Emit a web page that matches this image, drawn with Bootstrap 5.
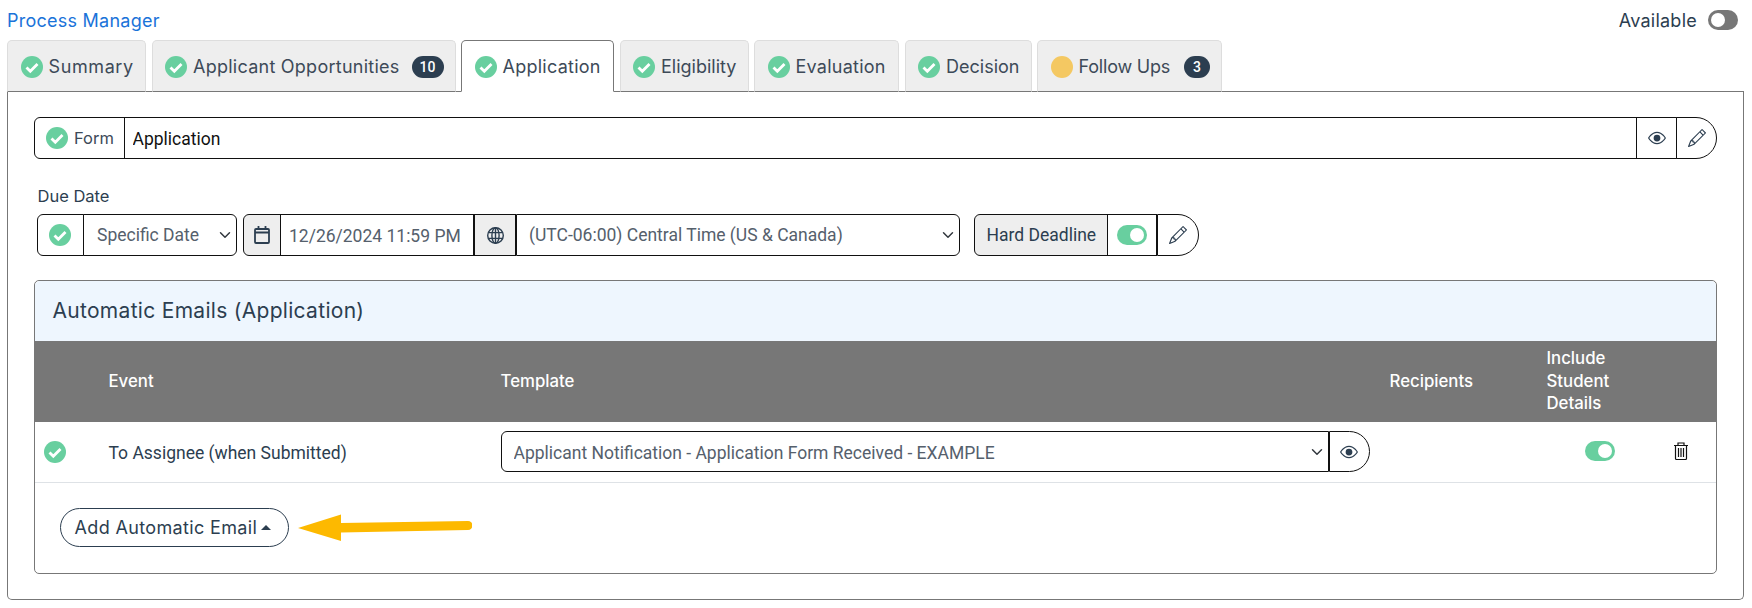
<!DOCTYPE html>
<html lang="en">

<head>
    <meta charset="UTF-8">
    <meta name="viewport" content="width=device-width, initial-scale=1.0">
    <title>Process Manager</title>
    <link href="https://cdn.jsdelivr.net/npm/bootstrap@5.3.0/dist/css/bootstrap.min.css" rel="stylesheet">
    <style>
        body {
            background-color: #fff;
            color: #2c3e50;
            font-family: Inter, "Open Sans", sans-serif;
            font-size: 18px;
            letter-spacing: .25px;
        }

        .page {
            padding: 0 8px 0 7px;
        }

        .top-row {
            height: 40px;
        }

        .top-row a {
            color: #1a73d9;
            text-decoration: none;
        }

        .available {
            gap: 11px;
            margin-right: 6px;
        }

        .nav-tabs {
            gap: 5.5px;
            border-bottom-color: #777;
        }

        .nav-tabs .nav-link {
            display: flex;
            align-items: center;
            height: 52px;
            padding: 1px 0 0 12.5px;
            gap: 6px;
            color: #3d4a58;
            background-color: #eee;
            border-color: #ddd #ddd #777;
            border-radius: 5px 5px 0 0;
        }

        .nav-tabs .nav-link.active {
            color: #3d4a58;
            background-color: #fff;
            border-color: #777 #777 #fff;
        }

        .nav-tabs .nav-item:nth-child(1) .nav-link { width: 139px; letter-spacing: .6px; }
        .nav-tabs .nav-item:nth-child(2) .nav-link { width: 304px; }
        .nav-tabs .nav-item:nth-child(3) .nav-link { width: 153px; }
        .nav-tabs .nav-item:nth-child(4) .nav-link { width: 129px; letter-spacing: 0; }
        .nav-tabs .nav-item:nth-child(5) .nav-link { width: 145px; }
        .nav-tabs .nav-item:nth-child(6) .nav-link { width: 127px; letter-spacing: 0; }
        .nav-tabs .nav-item:nth-child(7) .nav-link { width: 185px; letter-spacing: -.2px; }

        .nav-tabs .badge {
            margin-left: auto;
            margin-right: 11px;
            background-color: #2c3e50;
            font-family: "Roboto", sans-serif;
            font-size: 14px;
            font-weight: 500;
            letter-spacing: 0;
            padding: 4px 8px;
            height: 22px;
            line-height: 14px;
        }

        .nav-tabs .badge.single {
            padding: 4px 9px;
        }

        .status {
            width: 22px;
            height: 22px;
            flex-shrink: 0;
        }

        .panel {
            border: 1px solid #777;
            border-top: 0;
            border-radius: 0 0 5px 5px;
            padding: 25px 26px 25px 25.5px;
        }

        .input-group-text,
        .form-control,
        .form-select,
        .btn-cell {
            height: 42px;
            border-color: #111;
            color: #55606c;
            font-family: "Roboto", sans-serif;
            font-size: 17.5px;
            letter-spacing: 0;
            background-color: #fff;
        }

        .form-control {
            color: #111;
            padding: 1px 0 0 8px;
        }

        .form-control.muted {
            color: #55606c;
        }

        .input-group-text.shade {
            background-color: #eee;
            color: #2c3e50;
        }

        .input-group-text.form-name {
            width: 91px;
            padding: 0 0 0 11.5px;
            gap: 6px;
            color: #3d4a58;
            font-family: Inter, sans-serif;
            font-size: 16.5px;
        }

        .input-group-text.hard {
            padding: 0 11px 0 12px;
        }

        .input-group > :first-child {
            border-radius: 6px 0 0 6px;
        }

        .input-group > .last-square {
            border-radius: 0 6px 6px 0 !important;
        }

        .input-group > .btn-cell:last-child {
            border-radius: 0 21px 21px 0 !important;
        }

        .btn-cell {
            display: flex;
            align-items: center;
            justify-content: center;
            width: 41px;
            padding: 0;
            border-width: 1px;
            border-style: solid;
        }

        .form-select {
            padding: 1px 24px 0 12px;
            background-position: right 3px center;
        }

        .cell-38 { width: 38px; }
        .input-group > .cell-42 { width: 42px; }
        .cell-47 { width: 47px; }
        .cell-50 { width: 50px; }
        .input-group > .sel-kind { flex: 0 0 154px; width: 154px; padding-left: 13.5px; }
        .input-group > .sel-zone { flex: 0 0 444px; width: 444px; }
        .input-group > .in-date { flex: 0 0 194px; width: 194px; }

        .form-label-sm {
            font-size: 16.5px;
            letter-spacing: 0;
            line-height: 20px;
            margin: 27px 0 8px 4px;
        }

        .date-row {
            margin-left: 3px;
        }

        .date-row .input-group {
            width: auto;
            flex-wrap: nowrap;
        }

        .date-row .input-group + .input-group {
            margin-left: 6.5px;
        }

        .date-row .input-group + .input-group + .input-group {
            margin-left: 13.5px;
        }

        .form-switch {
            padding: 0;
            margin: 0;
            min-height: 0;
            display: flex;
        }

        .form-switch .form-check-input {
            width: 30px;
            height: 20px;
            margin: 0;
            border: 0;
            background-color: #777;
            background-position: left 3px center;
            background-size: 14px 14px;
            background-image: url("data:image/svg+xml,%3csvg xmlns='http://www.w3.org/2000/svg' viewBox='-4 -4 8 8'%3e%3ccircle r='4' fill='%23fff'/%3e%3c/svg%3e");
        }

        .form-switch .form-check-input:checked {
            background-color: #68cf9f;
            border: 0;
            background-position: right 3px center;
        }

        .emails {
            margin-top: 24px;
            border-color: #777;
            border-radius: 5px;
            overflow: hidden;
        }

        .emails .card-header {
            height: 60px;
            display: flex;
            align-items: center;
            padding: 0 18px;
            font-size: 21px;
            letter-spacing: .3px;
            background-color: #eef6fe;
            border-bottom: 0;
        }

        .emails table {
            table-layout: fixed;
            margin: 0;
        }

        .col-status { width: 66px; }
        .col-event { width: 392px; }
        .col-template { width: 889px; }
        .col-recipients { width: 157px; }
        .col-include { width: 101px; }

        .emails th {
            height: 81px;
            padding: 0 8px 1px;
            vertical-align: middle;
            font-size: 16.8px;
            font-weight: 500;
            letter-spacing: 0;
            line-height: 22.5px;
            color: #fff;
            background-color: #777;
            border: 0;
        }

        .emails td {
            height: 60px;
            padding: 0 8px;
            vertical-align: middle;
            border-bottom-color: #dee2e6;
            color: #2c3e50;
            font-family: "Roboto", sans-serif;
            font-size: 17.5px;
            letter-spacing: 0;
        }

        .emails td.event {
            padding-top: 2px;
        }

        .emails td .form-select,
        .emails td .btn-cell {
            height: 41px;
        }

        .emails td .form-select {
            border-radius: 6px 0 0 6px;
            padding-top: 2px;
        }

        .template-group {
            width: 869px;
            flex-wrap: nowrap;
        }

        .row-status {
            display: block;
            margin-left: 1px;
        }

        .include-switch {
            justify-content: flex-end;
            padding-right: 17px;
            margin-bottom: 2px;
        }

        .emails td.trash {
            padding-left: 15px;
            padding-bottom: 2px;
        }

        .btn-add {
            display: inline-flex;
            align-items: center;
            height: 39px;
            width: 229px;
            padding: 0 14px;
            gap: 4px;
            font-size: 18px;
            letter-spacing: .35px;
            color: #2c3e50;
            background-color: #fff;
            border: 1px solid #2c3e50;
            border-radius: 20px;
        }

        .add-row {
            height: 90px;
            padding-left: 25px;
            gap: 9px;
        }
    </style>
</head>

<body>
    <svg width="0" height="0" class="position-absolute">
        <symbol id="i-ok" viewBox="0 0 22 22">
            <circle cx="11" cy="11" r="11" fill="#68cf9f"></circle>
            <path d="M5.500 11.500l3.800 3.800L16.500 8" fill="none" stroke="#fff" stroke-width="2.800"></path>
        </symbol>
        <symbol id="i-eye" viewBox="0 0 16 16">
            <path fill="#2c3e50" d="M16 8s-3-5.5-8-5.5S0 8 0 8s3 5.5 8 5.5S16 8 16 8zM1.173 8a13.133 13.133 0 0 1 1.66-2.043C4.12 4.668 5.88 3.5 8 3.5c2.12 0 3.879 1.168 5.168 2.457A13.133 13.133 0 0 1 14.828 8c-.058.087-.122.183-.195.288-.335.48-.83 1.12-1.465 1.755C11.879 11.332 10.119 12.5 8 12.5c-2.12 0-3.879-1.168-5.168-2.457A13.134 13.134 0 0 1 1.172 8z"></path>
            <circle cx="8" cy="8" r="3" fill="#2c3e50"></circle>
        </symbol>
        <symbol id="i-pencil" viewBox="0 0 16 16">
            <path fill="#2c3e50" d="M12.146.146a.5.5 0 0 1 .708 0l3 3a.5.5 0 0 1 0 .708l-10 10a.5.5 0 0 1-.168.11l-5 2a.5.5 0 0 1-.65-.65l2-5a.5.5 0 0 1 .11-.168l10-10zM11.207 2.5 13.5 4.793 14.793 3.5 12.5 1.207 11.207 2.5zm1.586 3L10.5 3.207 4 9.707V10h.5a.5.5 0 0 1 .5.5v.5h.5a.5.5 0 0 1 .5.5v.5h.293l6.5-6.5zm-9.761 5.175-.106.106-1.528 3.821 3.821-1.528.106-.106A.5.5 0 0 1 5 12.5V12h-.5a.5.5 0 0 1-.5-.5V11h-.5a.5.5 0 0 1-.468-.325z"></path>
        </symbol>
    </svg>

    <div class="page">
        <div class="top-row d-flex justify-content-between align-items-center">
            <a href="#">Process Manager</a>
            <div class="available d-flex align-items-center">
                <span>Available</span>
                <div class="form-check form-switch"><input class="form-check-input" type="checkbox" role="switch"></div>
            </div>
        </div>

        <ul class="nav nav-tabs">
            <li class="nav-item"><a class="nav-link" href="#"><svg class="status"><use href="#i-ok"></use></svg>Summary</a></li>
            <li class="nav-item"><a class="nav-link" href="#"><svg class="status"><use href="#i-ok"></use></svg>Applicant Opportunities<span class="badge rounded-pill">10</span></a></li>
            <li class="nav-item"><a class="nav-link active" href="#"><svg class="status"><use href="#i-ok"></use></svg>Application</a></li>
            <li class="nav-item"><a class="nav-link" href="#"><svg class="status"><use href="#i-ok"></use></svg>Eligibility</a></li>
            <li class="nav-item"><a class="nav-link" href="#"><svg class="status"><use href="#i-ok"></use></svg>Evaluation</a></li>
            <li class="nav-item"><a class="nav-link" href="#"><svg class="status"><use href="#i-ok"></use></svg>Decision</a></li>
            <li class="nav-item"><a class="nav-link" href="#"><svg class="status" viewBox="0 0 22 22"><circle cx="11" cy="11" r="11" fill="#f4c862"></circle></svg>Follow Ups<span class="badge rounded-pill single">3</span></a></li>
        </ul>

        <div class="panel">
            <!-- Form -->
            <div class="input-group">
                <span class="input-group-text form-name"><svg class="status"><use href="#i-ok"></use></svg>Form</span>
                <input type="text" class="form-control" value="Application">
                <button class="btn-cell" type="button"><svg width="18" height="18"><use href="#i-eye"></use></svg></button>
                <button class="btn-cell" type="button"><svg width="18" height="18"><use href="#i-pencil"></use></svg></button>
            </div>

            <!-- Due date -->
            <div class="form-label-sm">Due Date</div>
            <div class="date-row d-flex">
                <div class="input-group">
                    <span class="input-group-text cell-47 justify-content-center p-0"><svg class="status"><use href="#i-ok"></use></svg></span>
                    <select class="form-select last-square sel-kind">
                        <option>Specific Date</option>
                    </select>
                </div>
                <div class="input-group">
                    <span class="input-group-text shade cell-38 justify-content-center p-0">
                        <svg width="16" height="18" viewBox="0 0 16 18" fill="none" stroke="#2c3e50" stroke-width="1.800"><rect x="1" y="3" width="14" height="14" rx="1"></rect><path d="M1 6.500h14M4.500 0v3.500M11.500 0v3.500"></path></svg>
                    </span>
                    <input type="text" class="form-control muted in-date" value="12/26/2024 11:59 PM">
                    <span class="input-group-text shade cell-42 justify-content-center p-0 ms-0">
                        <svg width="17" height="17" viewBox="0 0 17 17" fill="none" stroke="#2c3e50" stroke-width="1.400"><circle cx="8.500" cy="8.500" r="7.800"></circle><ellipse cx="8.500" cy="8.500" rx="3.600" ry="7.800"></ellipse><path d="M1.400 5.600h14.200M1.400 11.400h14.200M8.500.700v15.600"></path></svg>
                    </span>
                    <select class="form-select last-square sel-zone ms-0">
                        <option>(UTC-06:00) Central Time (US &amp; Canada)</option>
                    </select>
                </div>
                <div class="input-group">
                    <span class="input-group-text shade hard">Hard Deadline</span>
                    <span class="input-group-text cell-50 justify-content-center p-0">
                        <span class="form-check form-switch"><input class="form-check-input" type="checkbox" role="switch" checked></span>
                    </span>
                    <button class="btn-cell ms-0 cell-42" type="button"><svg width="18" height="18"><use href="#i-pencil"></use></svg></button>
                </div>
            </div>

            <!-- Automatic emails -->
            <div class="card emails">
                <div class="card-header">Automatic Emails (Application)</div>
                <table class="table">
                    <colgroup>
                        <col class="col-status">
                        <col class="col-event">
                        <col class="col-template">
                        <col class="col-recipients">
                        <col class="col-include">
                        <col>
                    </colgroup>
                    <thead>
                        <tr>
                            <th></th>
                            <th>Event</th>
                            <th>Template</th>
                            <th>Recipients</th>
                            <th>Include Student Details</th>
                            <th></th>
                        </tr>
                    </thead>
                    <tbody>
                        <tr>
                            <td><svg class="status row-status"><use href="#i-ok"></use></svg></td>
                            <td class="event">To Assignee (when Submitted)</td>
                            <td>
                                <div class="input-group template-group">
                                    <select class="form-select">
                                        <option>Applicant Notification - Application Form Received - EXAMPLE</option>
                                    </select>
                                    <button class="btn-cell ms-0" type="button"><svg width="18" height="18"><use href="#i-eye"></use></svg></button>
                                </div>
                            </td>
                            <td></td>
                            <td>
                                <div class="form-check form-switch include-switch"><input class="form-check-input" type="checkbox" role="switch" checked></div>
                            </td>
                            <td class="trash">
                                <svg class="d-block mx-auto" width="16" height="20" viewBox="0 0 16 19" fill="none" stroke="#111" stroke-width="1.200"><path d="M1 4h14M5 4V1.500h6V4M2.500 4v13a1 1 0 0 0 1 1h9a1 1 0 0 0 1-1V4M5.500 6.500v9M8 6.500v9M10.500 6.500v9"></path></svg>
                            </td>
                        </tr>
                    </tbody>
                </table>
                <div class="add-row d-flex align-items-center">
                    <button class="btn-add" type="button">Add Automatic Email<svg width="10" height="5" viewBox="0 0 10 5"><path d="M5 0L10 5H0z" fill="#2c3e50"></path></svg></button>
                    <!-- annotation arrow -->
                    <svg width="174" height="27" viewBox="0 0 174 27">
                        <path d="M0 14L43 .500V9L170 7a4.500 4.500 0 0 1 0 9L43 18.500V27z" fill="#fdb900"></path>
                    </svg>
                </div>
            </div>
        </div>
    </div>

    <script src="https://cdn.jsdelivr.net/npm/bootstrap@5.3.0/dist/js/bootstrap.bundle.min.js"></script>
</body>

</html>
